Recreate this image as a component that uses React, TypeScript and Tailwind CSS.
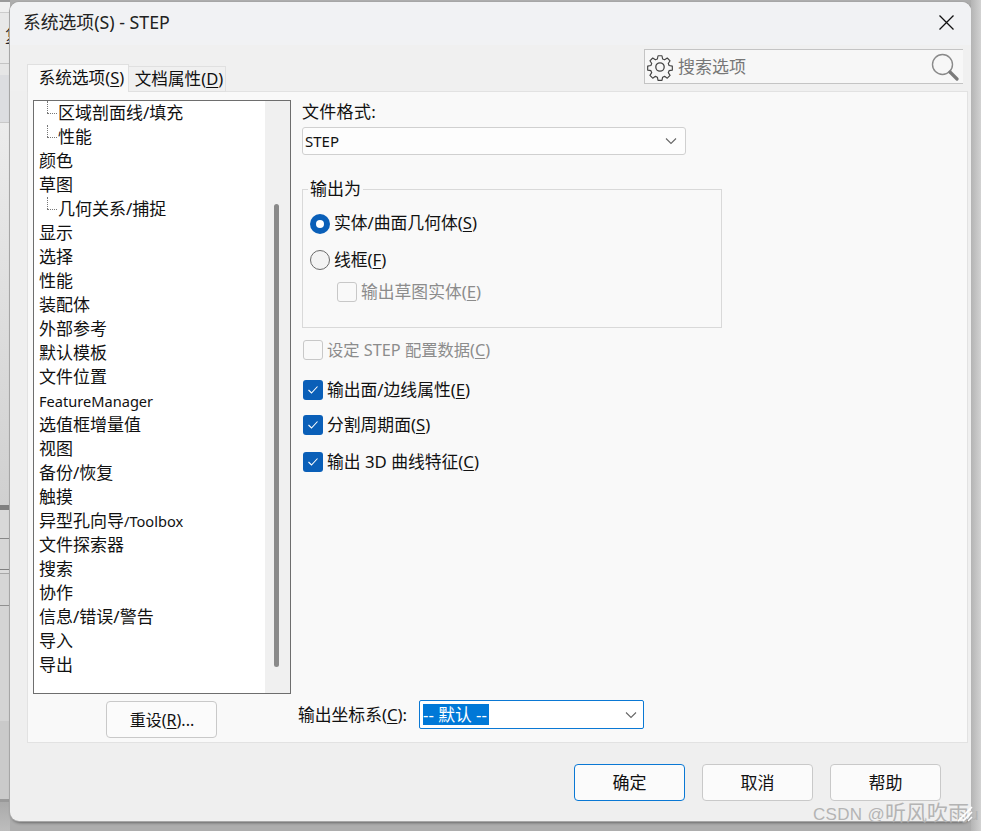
import React from "react";

const FONT = { fontFamily: '"Noto Sans", "Noto Sans CJK SC", sans-serif' };

const tree: [string, boolean][] = [
  ["区域剖面线/填充", true],
  ["性能", true],
  ["颜色", false],
  ["草图", false],
  ["几何关系/捕捉", true],
  ["显示", false],
  ["选择", false],
  ["性能", false],
  ["装配体", false],
  ["外部参考", false],
  ["默认模板", false],
  ["文件位置", false],
  ["FeatureManager", false],
  ["选值框增量值", false],
  ["视图", false],
  ["备份/恢复", false],
  ["触摸", false],
  ["异型孔向导/Toolbox", false],
  ["文件探索器", false],
  ["搜索", false],
  ["协作", false],
  ["信息/错误/警告", false],
  ["导入", false],
  ["导出", false],
];

function TreeLabel({ t }: { t: string }) {
  if (t === "FeatureManager") return <span className="text-[14.6px] pt-[2px]">{t}</span>;
  if (t.endsWith("/Toolbox"))
    return (
      <span>
        异型孔向导<span className="text-[14.6px]">/Toolbox</span>
      </span>
    );
  return <span>{t}</span>;
}

function Chevron() {
  return (
    <svg width="12" height="8" viewBox="0 0 12 8" fill="none" stroke="#666" strokeWidth="1.1">
      <path d="M1 1.5 L6 6.5 L11 1.5" />
    </svg>
  );
}

function Check({ label, u, disabled, checked, extra, narrow }: { label: string; u: string; disabled?: boolean; checked?: boolean; extra?: string; narrow?: boolean }) {
  return (
    <div className={`flex items-center gap-1 h-5 ${extra ?? ""}`}>
      {checked ? (
        <div className="w-5 h-5 rounded-[3px] bg-[#0a5fb8] flex items-center justify-center">
          <svg width="12" height="10" viewBox="0 0 12 10" fill="none" stroke="#fff" strokeWidth="1.1">
            <path d="M1.5 5 L4.5 8 L10.5 1.5" />
          </svg>
        </div>
      ) : (
        <div className="w-5 h-5 rounded-[3px] border border-[#c8c8c8] bg-[#f9f9f9]" />
      )}
      <span className={`${narrow ? "text-[16.3px]" : "text-[16.8px]"} leading-5 whitespace-nowrap ${disabled ? "text-[#8c8c8c]" : "text-[#111]"}`}>
        {label}(<span className="underline underline-offset-2">{u}</span>)
      </span>
    </div>
  );
}

function Btn({ children, primary, extra }: { children: React.ReactNode; primary?: boolean; extra?: string }) {
  return (
    <div
      className={`w-[111px] h-[37px] rounded-[4px] bg-[#fbfbfb] border flex items-center justify-center text-[17px] text-[#111] ${
        primary ? "border-[#0a78d4]" : "border-[#c9c9c9]"
      } ${extra ?? ""}`}
    >
      {children}
    </div>
  );
}

export default function App() {
  return (
    <div className="relative w-[981px] h-[831px] overflow-hidden bg-[#adadad] flex" style={FONT}>
      {/* background window peeking out at the left */}
      <div className="w-[10px] h-full flex flex-col shrink-0 bg-[#dedede]">
        <div className="h-[2px] bg-[#9a9a9a]" />
        <div className="h-[10px] bg-[#efefef]" />
        <div className="h-[1px] bg-[#cccccc]" />
        <div className="h-[50px] bg-[#e8e8e8] pl-[5px] pt-[13px] overflow-hidden text-[17px] leading-5 text-[#222]">复</div>
        <div className="h-[1px] bg-[#c4c4c4]" />
        <div className="h-[11px] bg-[#e6e6e6]" />
        <div className="h-[47px] bg-[#dcdde0]" />
        <div className="h-[1px] bg-[#c8c8c8]" />
        <div className="h-[382px] bg-linear-to-b from-[#ececec] to-[#d0d0d0]" />
        <div className="h-[5px] bg-[#808080]" />
        <div className="h-[28px] bg-[#d8d8d8]" />
        <div className="h-[1px] bg-[#888888]" />
        <div className="h-[30px] bg-[#d6d6d6]" />
        <div className="h-[1px] bg-[#808080]" />
        <div className="h-[3px] bg-[#dcdcdc]" />
        <div className="h-[1px] bg-[#a8a8a8]" />
        <div className="h-[31px] bg-[#d6d6d6]" />
        <div className="h-[1px] bg-[#909090]" />
        <div className="h-[115px] bg-[#d4d4d4]" />
        <div className="h-[78px] bg-[#cacaca]" />
        <div className="h-[3px] bg-[#999999]" />
        <div className="flex-1 bg-linear-to-b from-[#aaaaaa] to-[#bdbdbd]" />
      </div>

      <div className="w-[961px] h-[819px] mt-[2px] rounded-[9px] bg-[#efefef] overflow-hidden flex flex-col shrink-0 shadow-[0_0_0_1px_#a6a6a6,1px_2px_3px_rgba(0,0,0,0.4)]">
        {/* title bar */}
        <div className="h-[43px] bg-[#f1f2f4] flex items-center justify-between pl-[13px] pr-[17px] shrink-0">
          <span className="text-[17.8px] text-[#222] -mt-[2px]">系统选项(S) - STEP</span>
          <svg width="15" height="15" viewBox="0 0 15 15" fill="none" stroke="#111" strokeWidth="1.3" className="-mt-[2px]">
            <path d="M.5 .5 L14.5 14.5 M14.5 .5 L.5 14.5" />
          </svg>
        </div>

        {/* tabs + search */}
        <div className="h-[46px] bg-[#f0f0f0] flex justify-between items-start pl-[17px] pr-[8px] shrink-0">
          <div className="flex items-end h-[47px] relative z-10">
            <div className="w-[102px] h-[28px] bg-[#f9f9f9] border border-b-0 border-[#e0e0e0] pl-[7px] text-[16.6px] text-[#111] flex items-center justify-center whitespace-nowrap">
              <span>系统选项(<span className="underline underline-offset-2">S</span>)</span>
            </div>
            <div className="w-[97px] h-[26px] bg-[#f0f0f0] border border-l-0 border-[#e0e0e0] pl-[4px] text-[16.6px] text-[#111] flex items-center justify-center whitespace-nowrap">
              <span>文档属性(<span className="underline underline-offset-2">D</span>)</span>
            </div>
          </div>
          <div className="w-[319px] h-[35px] mt-[4px] bg-[#f7f7f7] border-y border-l border-[#c4c4c4] flex items-center pl-[1px] pr-[4px]">
            <svg width="28" height="28" viewBox="0 0 28 28" fill="none" stroke="#444" strokeWidth="1.3" className="shrink-0">
              <circle cx="14" cy="14" r="4.2" />
              <path d="M11.8 1.5 h4.4 l.7 3.6 2.2 .9 3-2 3.1 3.1 -2 3 .9 2.2 3.6 .7 v4.4 l-3.6 .7 -.9 2.2 2 3 -3.1 3.1 -3 -2 -2.2 .9 -.7 3.6 h-4.4 l-.7 -3.6 -2.2 -.9 -3 2 -3.1 -3.1 2 -3 -.9 -2.2 -3.6 -.7 v-4.4 l3.6 -.7 .9 -2.2 -2 -3 3.1 -3.1 3 2 2.2 -.9 z" strokeLinejoin="round" transform="translate(1.4 1.4) scale(.9)" />
            </svg>
            <span className="ml-[4px] text-[17px] text-[#777]">搜索选项</span>
            <svg width="28" height="28" viewBox="0 0 28 28" fill="none" className="ml-auto shrink-0">
              <circle cx="11.5" cy="11.5" r="10" stroke="#8a8a8a" strokeWidth="1.4" />
              <path d="M19 19 L26 26" stroke="#7a7a7a" strokeWidth="3.2" strokeLinecap="round" />
            </svg>
          </div>
        </div>

        {/* main panel */}
        <div className="ml-[17px] mr-[3px] h-[652px] shrink-0 bg-[#f9f9f9] border border-[#e2e2e2] flex pl-[5px] pt-[8px]">
          {/* left column */}
          <div className="w-[258px] shrink-0 flex flex-col items-center">
            <div className="w-[258px] h-[594px] bg-white border border-[#6e6e6e] flex overflow-hidden">
              <div className="flex-1 flex flex-col">
                {tree.map(([t, sub], i) => (
                  <div key={i} className="h-[24px] shrink-0 flex items-center text-[17px] text-[#111] whitespace-nowrap pl-[5px]">
                    {sub && (
                      <span className="relative w-[19px] h-[24px] shrink-0">
                        <span className="absolute left-[8px] top-0 h-[12px] border-l border-dotted border-[#777]" />
                        <span className="absolute left-[8px] top-[12px] w-[10px] border-t border-dotted border-[#777]" />
                      </span>
                    )}
                    <TreeLabel t={t} />
                  </div>
                ))}
              </div>
              <div className="w-[25px] shrink-0 bg-[#f0f0f0] pl-[9px] pt-[103px]">
                <div className="w-[5px] h-[463px] rounded-full bg-[#8a8a8a]" />
              </div>
            </div>
            <Btn extra="mt-[7px] mr-[2px]">
              <span className="text-[16px] pl-[2px]">重设(<span className="underline underline-offset-2">R</span>)...</span>
            </Btn>
          </div>

          {/* right column */}
          <div className="flex-1 flex flex-col pl-[11px]">
            <div className="text-[17px] leading-5 text-[#111] mt-[2px] tracking-[0.3px]">文件格式:</div>
            <div className="w-[384px] h-[28px] mt-[5px] bg-[#fdfdfd] border border-[#d0d0d0] rounded-[3px] flex items-center justify-between pl-[2px] pr-[8px] text-[15px] text-[#111]">
              <span>STEP</span>
              <Chevron />
            </div>

            <div className="relative w-[420px] h-[139px] mt-[34px] border border-[#d9d9d9] pl-[7px] pt-[24px]">
              <span className="absolute left-[5px] -top-[11px] bg-[#f9f9f9] px-[2px] text-[17px] leading-5 text-[#111]">输出为</span>
              <div className="flex items-center gap-[4px] h-5">
                <span className="w-5 h-5 rounded-full bg-[#0a5fb8] flex items-center justify-center">
                  <span className="w-2 h-2 rounded-full bg-white" />
                </span>
                <span className="text-[16.8px] text-[#111] -mt-[2px]">实体/曲面几何体(<span className="underline underline-offset-2">S</span>)</span>
              </div>
              <div className="flex items-center gap-[4px] h-5 mt-[16px]">
                <span className="w-5 h-5 rounded-full border border-[#6a6a6a] bg-[#f3f3f3]" />
                <span className="text-[16.8px] text-[#111]">线框(<span className="underline underline-offset-2">F</span>)</span>
              </div>
              <Check label="输出草图实体" u="E" disabled extra="ml-[27px] mt-[12px]" />
            </div>

            <Check label="设定 STEP 配置数据" u="C" disabled narrow extra="mt-[12px] ml-[1px]" />
            <Check label="输出面/边线属性" u="E" checked extra="mt-[20px] ml-[1px]" />
            <Check label="分割周期面" u="S" checked extra="mt-[15px] ml-[1px]" />
            <Check label="输出 3D 曲线特征" u="C" checked extra="mt-[17px] ml-[1px]" />

            <div className="mt-auto mb-[13px] -ml-[4px] flex items-center">
              <span className="w-[121px] text-[16.8px] text-[#111] whitespace-nowrap">
                输出坐标系(<span className="underline underline-offset-2">C</span>):
              </span>
              <div className="w-[225px] h-[29px] bg-white border border-[#0a78d4] rounded-[2px] flex items-center justify-between pl-[3px] pr-[6px]">
                <span className="bg-[#0078d7] text-white text-[16.8px] leading-[21px] h-[21px] w-[66px] whitespace-nowrap overflow-hidden">-- 默认 --</span>
                <Chevron />
              </div>
            </div>
          </div>
        </div>

        {/* footer */}
        <div className="flex-1 flex justify-end items-start pt-[21px] pr-[30px] gap-[17px]">
          <Btn primary extra="mr-0">确定</Btn>
          <Btn>取消</Btn>
          <Btn>帮助</Btn>
        </div>
      </div>

      <div className="w-[10px] h-full shrink-0 bg-linear-to-r from-[#b4b4b4] to-[#d2d2d2]" />

      {/* watermark */}
      <span className="absolute left-[813px] top-[801px] text-[17px] leading-6 text-[#b4b4b4] tracking-[0.3px] whitespace-nowrap" style={{ fontFamily: '"Liberation Sans", "Noto Sans CJK SC", sans-serif' }}>
        CSDN @<span className="text-[21px] tracking-[0px]">听风吹雨</span>u
      </span>
      {/* resize grip */}
      <svg width="16" height="18" viewBox="0 0 16 18" fill="none" stroke="#ffffff" strokeWidth="1.6" className="absolute left-[957px] top-[804px]">
        <path d="M1 17 L15 3 M6 17 L15 8 M11 17 L15 13" />
      </svg>
    </div>
  );
}
